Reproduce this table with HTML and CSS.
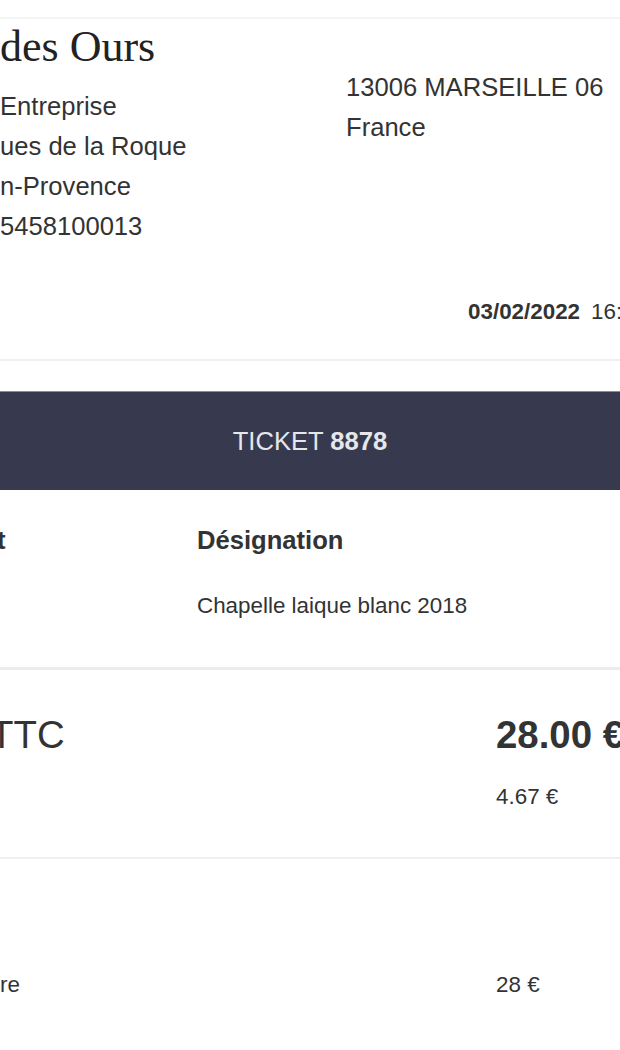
FILE: index.html
```html
<!DOCTYPE html>
<html lang="fr">
<head>
<meta charset="utf-8">
<title>Ticket 8878</title>
<link rel="stylesheet" href="styles.css">
</head>
<body>
<div class="page">
  <div class="rule rule-top"></div>
  <header class="header">
    <div class="shop">
      <h1 class="shop-name">des Ours</h1>
      <div class="lines">
        <div>Entreprise</div>
        <div>ues de la Roque</div>
        <div>n-Provence</div>
        <div>5458100013</div>
      </div>
    </div>
    <div class="client lines">
      <div>13006 MARSEILLE 06</div>
      <div>France</div>
    </div>
  </header>
  <div class="date-row"><b>03/02/2022</b><span class="time">16:42</span></div>
  <div class="rule rule-date"></div>
  <div class="ticket-bar"><span>TICKET <b>8878</b></span></div>
  <div class="items">
    <div class="row head"><span class="c1 cut">t</span><span class="c2">Désignation</span></div>
    <div class="row item"><span class="c1"></span><span class="c2">Chapelle laique blanc 2018</span></div>
  </div>
  <div class="rule rule-thick"></div>
  <div class="totals">
    <div class="row total"><span class="c1 ttc">TTC</span><span class="money"><b>28.00 €</b></span></div>
    <div class="row tax"><span class="c1"></span><span class="money">4.67 €</span></div>
  </div>
  <div class="rule rule-pay"></div>
  <div class="payments">
    <div class="row pay"><span class="c1">re</span><span class="money">28 €</span></div>
  </div>
</div>
</body>
</html>
```
FILE: styles.css
```css
html, body {
  margin: 0;
  padding: 0;
  background: #ffffff;
}
.page {
  width: 620px;
  overflow: hidden;
  font-family: "Liberation Sans", Arial, sans-serif;
  color: #333333;
  font-size: 25.6px;
}
.rule {
  height: 2px;
  background: #efefef;
}
.rule-top {
  margin-top: 17px;
  background: #f4f4f4;
}
.header {
  display: grid;
  grid-template-columns: 346px 1fr;
}
.shop-name {
  margin: 2px 0 0 0;
  font-family: "Liberation Serif", "Times New Roman", serif;
  font-weight: normal;
  font-size: 44px;
  line-height: 52px;
  color: #222222;
  white-space: nowrap;
}
.lines div {
  line-height: 40px;
  white-space: nowrap;
}
.shop .lines {
  margin-top: 13px;
}
.client {
  padding-top: 48px;
}
.date-row {
  margin-top: 46px;
  padding-left: 468px;
  font-size: 22.4px;
  line-height: 40px;
  white-space: nowrap;
}
.time {
  margin-left: 11px;
}
.rule-date {
  margin-top: 27px;
}
.ticket-bar {
  margin-top: 30px;
  height: 99px;
  background: #373a4f;
  color: #e6e7ea;
  display: flex;
  align-items: center;
  justify-content: center;
  border-top: 1px solid #8a8c99;
  box-sizing: border-box;
  white-space: nowrap;
}
.row {
  display: grid;
  grid-template-columns: 197px 1fr;
  white-space: nowrap;
}
.cut {
  margin-left: -3px;
}
.items {
  margin-top: 30px;
}
.head {
  font-weight: bold;
  line-height: 40px;
}
.item {
  margin-top: 26px;
  font-size: 22.4px;
  line-height: 40px;
}
.rule-thick {
  margin-top: 41px;
  height: 3px;
  background: #ececec;
}
.totals .row,
.payments .row {
  grid-template-columns: 496px 1fr;
}
.totals {
  margin-top: 40px;
}
.total {
  font-size: 38.4px;
  line-height: 50px;
}
.ttc {
  margin-left: -10px;
}
.tax {
  margin-top: 17px;
  font-size: 22.4px;
  line-height: 40px;
}
.rule-pay {
  margin-top: 40px;
}
.payments {
  margin-top: 106px;
}
.pay {
  font-size: 22.4px;
  line-height: 40px;
}
```
